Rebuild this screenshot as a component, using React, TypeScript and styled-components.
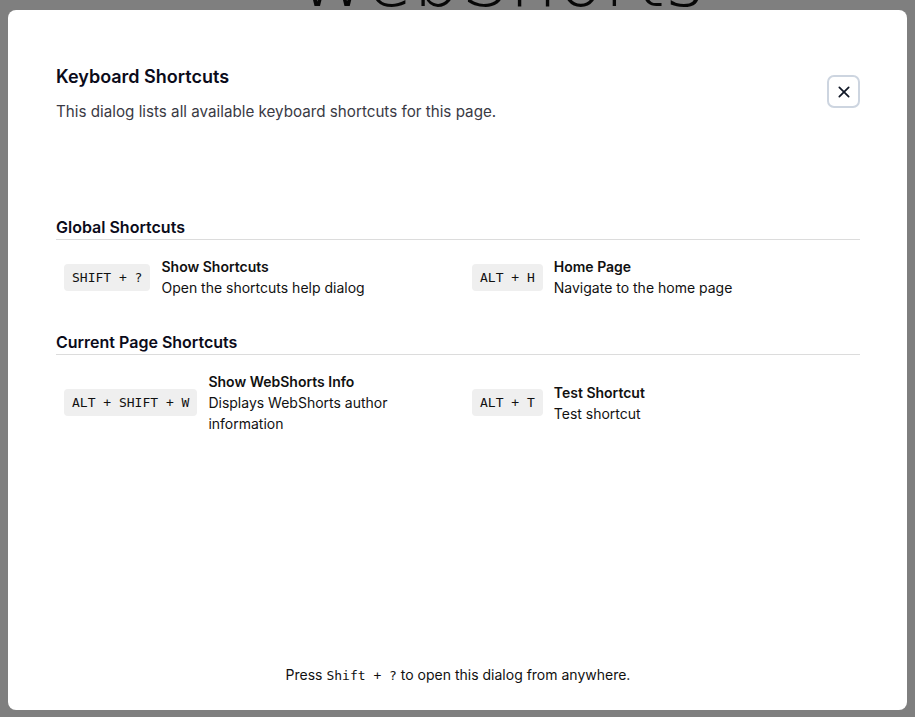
import React from 'react';
import styled, { createGlobalStyle } from 'styled-components';

interface Shortcut {
  keys: string;
  title: string;
  description: string;
}

const GlobalStyle = createGlobalStyle`
  html, body {
    margin: 0;
    padding: 0;
    width: 915px;
    height: 717px;
    overflow: hidden;
    background: #ffffff;
  }
  * {
    box-sizing: border-box;
  }
`;

const Page = styled.div`
  position: relative;
  width: 915px;
  height: 717px;
  overflow: hidden;
  font-family: Inter, 'Noto Sans', sans-serif;
`;

// page heading that sits under the overlay, only its lower part peeks out above the dialog
const BackTitle = styled.h1`
  position: absolute;
  top: -66px;
  left: 0;
  width: 1000px;
  margin: 0;
  text-align: center;
  font-family: 'DejaVu Sans', sans-serif;
  font-weight: 200;
  font-size: 76px;
  line-height: 1.2;
  color: #111;
`;

const Overlay = styled.div`
  position: absolute;
  inset: 0;
  background: rgba(0, 0, 0, 0.5);
  padding: 10px 8px 7px 8px;
  display: flex;
`;

const Dialog = styled.div`
  flex: 1;
  background: #ffffff;
  border-radius: 8px;
  padding: 55px 47px 24px 48px;
  display: flex;
  flex-direction: column;
`;

const Header = styled.div`
  display: flex;
  justify-content: space-between;
  align-items: flex-start;
  margin-bottom: 92px;
`;

const HeaderText = styled.div`
  display: flex;
  flex-direction: column;
  gap: 12px;
`;

const Title = styled.h2`
  margin: 0;
  font-size: 18px;
  font-weight: 600;
  line-height: 24px;
  color: #0b0b1a;
`;

const Description = styled.p`
  margin: 0;
  font-size: 15.2px;
  line-height: 22px;
  color: #3a3a44;
`;

const CloseButton = styled.button`
  width: 33px;
  height: 33px;
  margin-top: 10px;
  border: 2px solid #cdd5e0;
  border-radius: 7px;
  background: #fff;
  display: flex;
  align-items: center;
  justify-content: center;
  padding: 0;
  cursor: pointer;
  color: #111827;
`;

const Section = styled.section`
  margin-bottom: 24px;
`;

const SectionTitle = styled.h3`
  margin: 0;
  border-bottom: 1px solid #dcdcdc;
  font-size: 16px;
  font-weight: 600;
  line-height: 24px;
  color: #0b0b1a;
`;

const ShortcutGrid = styled.div`
  display: grid;
  grid-template-columns: 1fr 1fr;
  column-gap: 12px;
  padding-top: 8px;
`;

const Item = styled.div`
  display: flex;
  align-items: center;
  gap: 11px;
  padding: 8px;
`;

const Kbd = styled.kbd`
  flex-shrink: 0;
  background: #efefef;
  border-radius: 4px;
  padding: 0 8px;
  height: 27px;
  display: inline-flex;
  align-items: center;
  font-family: 'DejaVu Sans Mono', 'Liberation Mono', monospace;
  font-size: 13px;
  color: #111;
  white-space: pre;
`;

const ItemText = styled.div`
  display: flex;
  flex-direction: column;
  font-size: 14px;
  line-height: 21px;
  color: #111;
`;

const ItemTitle = styled.span`
  font-weight: 600;
`;

const Footer = styled.p`
  margin: auto 0 0 0;
  text-align: center;
  font-size: 14px;
  line-height: 20px;
  color: #111;
`;

const FooterKey = styled.code`
  font-family: 'DejaVu Sans Mono', 'Liberation Mono', monospace;
  font-size: 13px;
  white-space: pre;
`;

const globalShortcuts: Shortcut[] = [
  { keys: 'SHIFT + ?', title: 'Show Shortcuts', description: 'Open the shortcuts help dialog' },
  { keys: 'ALT + H', title: 'Home Page', description: 'Navigate to the home page' },
];

const pageShortcuts: Shortcut[] = [
  { keys: 'ALT + SHIFT + W', title: 'Show WebShorts Info', description: 'Displays WebShorts author information' },
  { keys: 'ALT + T', title: 'Test Shortcut', description: 'Test shortcut' },
];

function ShortcutSection({ title, items }: { title: string; items: Shortcut[] }) {
  return (
    <Section>
      <SectionTitle>{title}</SectionTitle>
      <ShortcutGrid>
        {items.map(item => (
          <Item key={item.keys}>
            <Kbd>{item.keys}</Kbd>
            <ItemText>
              <ItemTitle>{item.title}</ItemTitle>
              <span>{item.description}</span>
            </ItemText>
          </Item>
        ))}
      </ShortcutGrid>
    </Section>
  );
}

function App() {
  return (
    <Page>
      <GlobalStyle />
      <BackTitle>WebShorts</BackTitle>
      <Overlay>
        <Dialog role="dialog">
          <Header>
            <HeaderText>
              <Title>Keyboard Shortcuts</Title>
              <Description>This dialog lists all available keyboard shortcuts for this page.</Description>
            </HeaderText>
            <CloseButton aria-label="Close">
              <svg width="16" height="16" viewBox="0 0 24 24" fill="none" stroke="currentColor" strokeWidth="2.6" strokeLinecap="round">
                <path d="M5 5l14 14M19 5L5 19" />
              </svg>
            </CloseButton>
          </Header>
          <ShortcutSection title="Global Shortcuts" items={globalShortcuts} />
          <ShortcutSection title="Current Page Shortcuts" items={pageShortcuts} />
          <Footer>
            Press <FooterKey>Shift + ?</FooterKey> to open this dialog from anywhere.
          </Footer>
        </Dialog>
      </Overlay>
    </Page>
  );
}

export default App;
